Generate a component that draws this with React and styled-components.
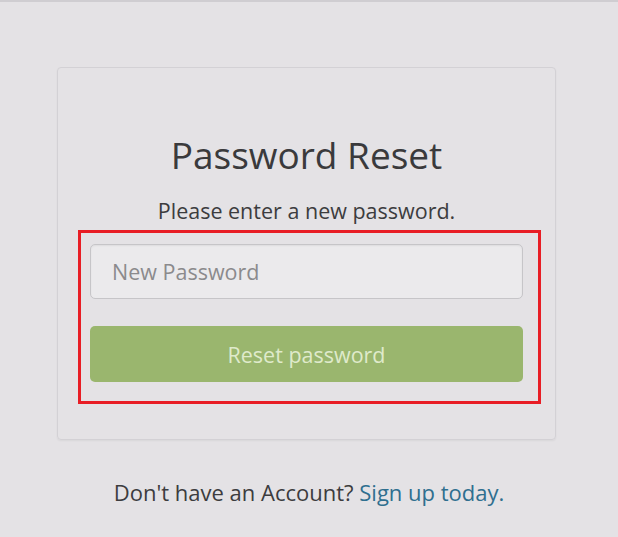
import styled, { createGlobalStyle } from "styled-components";

const GlobalStyle = createGlobalStyle`
  html, body {
    margin: 0;
    padding: 0;
    background: #e4e2e5;
  }
  body {
    font-family: "Open Sans", "Noto Sans", sans-serif;
    color: #3b3b3d;
  }
`;

const Page = styled.div`
  min-height: 537px;
  border-top: 2px solid #cfcdd1;
  box-sizing: border-box;
  padding-top: 65px;
`;

const Card = styled.div`
  width: 499px;
  margin-left: 57px;
  box-sizing: border-box;
  border: 1px solid #d3d1d5;
  border-radius: 4px;
  box-shadow: 0 1px 2px rgba(0, 0, 0, 0.05);
  padding: 66px 32px 35px;
  display: flex;
  flex-direction: column;
`;

const Title = styled.h1`
  margin: 0;
  text-align: center;
  font-weight: 400;
  font-size: 37px;
  line-height: 42px;
  color: #3a3a3c;
`;

const Subtitle = styled.p`
  margin: 23px 0 0;
  text-align: center;
  font-size: 21.5px;
  line-height: 24px;
  color: #3c3c3e;
`;

const Highlight = styled.div`
  margin: 7px -18px 0 -12px;
  border: 3px solid #e81d25;
  padding: 11px 15px 19px 9px;
  display: flex;
  flex-direction: column;
  gap: 27px;
`;

const Input = styled.input`
  height: 55px;
  box-sizing: border-box;
  border: 1px solid #c6c5c8;
  border-radius: 5px;
  background: #ebeaec;
  box-shadow: inset 0 1px 2px rgba(0, 0, 0, 0.06);
  padding: 0 21px;
  font-family: inherit;
  font-size: 21.5px;
  color: #3b3b3d;
  outline: none;

  &::placeholder {
    color: #8b8a8d;
  }
`;

const Button = styled.button`
  height: 56px;
  border: none;
  border-radius: 5px;
  background: #9ab66e;
  color: #dfeacb;
  font-family: inherit;
  font-size: 21.5px;
  cursor: pointer;
`;

const Footer = styled.p`
  margin: 40px 0 0;
  text-align: center;
  font-size: 22px;
  line-height: 24px;
  color: #3c3c3e;
`;

const Link = styled.a`
  color: #2f6f8f;
  text-decoration: none;
`;

export default function App() {
  return (
    <>
      <GlobalStyle />
      <Page>
        <Card>
          <Title>Password Reset</Title>
          <Subtitle>Please enter a new password.</Subtitle>
          <Highlight>
            <Input type="password" placeholder="New Password" />
            <Button type="button">Reset password</Button>
          </Highlight>
        </Card>
        <Footer>
          Don't have an Account? <Link href="#">Sign up today.</Link>
        </Footer>
      </Page>
    </>
  );
}
